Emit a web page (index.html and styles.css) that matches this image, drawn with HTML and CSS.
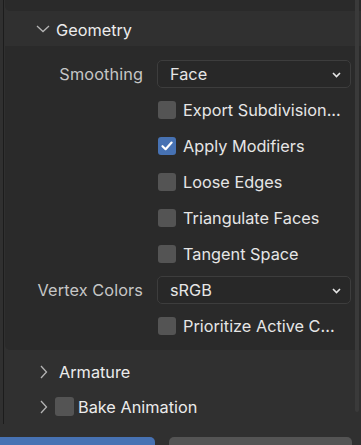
FILE: index.html
```html
<!DOCTYPE html>
<html>
<head>
<meta charset="utf-8">
<link rel="stylesheet" href="styles.css">
</head>
<body>
<div class="root">
  <div class="gutter"></div>
  <div class="main">
    <div class="topbox"></div>
    <div class="header">
      <svg class="chev-down" width="14" height="8" viewBox="0 0 14 8"><path d="M1 1 L7 6.5 L13 1" fill="none" stroke="#b4b4b4" stroke-width="1.3"/></svg>
      <span class="title">Geometry</span>
    </div>
    <div class="subbox">
      <div class="label">Smoothing</div>
      <div class="ctl"><div class="dropdown"><span>Face</span><svg class="dd-chev" width="9" height="6" viewBox="0 0 9 6"><path d="M1 1 L4.5 4.5 L8 1" fill="none" stroke="#e6e6e6" stroke-width="1.6"/></svg></div></div>

      <div class="label"></div>
      <div class="ctl"><span class="cb"></span><span class="txt">Export Subdivision...</span></div>

      <div class="label"></div>
      <div class="ctl"><span class="cb on"><svg width="18" height="18" viewBox="0 0 18 18"><path d="M4.5 9.2 L7.6 12.2 L13.6 5.6" fill="none" stroke="#fff" stroke-width="2.2" stroke-linecap="round" stroke-linejoin="round"/></svg></span><span class="txt">Apply Modifiers</span></div>

      <div class="label"></div>
      <div class="ctl"><span class="cb"></span><span class="txt">Loose Edges</span></div>

      <div class="label"></div>
      <div class="ctl"><span class="cb"></span><span class="txt">Triangulate Faces</span></div>

      <div class="label"></div>
      <div class="ctl"><span class="cb"></span><span class="txt">Tangent Space</span></div>

      <div class="label">Vertex Colors</div>
      <div class="ctl"><div class="dropdown"><span>sRGB</span><svg class="dd-chev" width="9" height="6" viewBox="0 0 9 6"><path d="M1 1 L4.5 4.5 L8 1" fill="none" stroke="#e6e6e6" stroke-width="1.6"/></svg></div></div>

      <div class="label"></div>
      <div class="ctl"><span class="cb"></span><span class="txt">Prioritize Active C...</span></div>
    </div>
    <div class="section first">
      <svg class="chev-right" width="8" height="14" viewBox="0 0 8 14"><path d="M1 1 L6.5 7 L1 13" fill="none" stroke="#b4b4b4" stroke-width="1.3"/></svg>
      <span class="title">Armature</span>
    </div>
    <div class="section">
      <svg class="chev-right" width="8" height="14" viewBox="0 0 8 14"><path d="M1 1 L6.5 7 L1 13" fill="none" stroke="#b4b4b4" stroke-width="1.3"/></svg>
      <span class="cb small"></span>
      <span class="title">Bake Animation</span>
    </div>
    <div class="scrollbar"></div>
  </div>
</div>
<div class="buttons">
  <div class="btn primary"></div>
  <div class="btn secondary"></div>
</div>
</body>
</html>
```

FILE: styles.css
```css
html, body {
  margin: 0;
  padding: 0;
  background: #303030;
  width: 361px;
  height: 445px;
  overflow: hidden;
  font-family: Inter, "Noto Sans", sans-serif;
  font-size: 16.3px;
  color: #e6e6e6;
}
.root {
  display: flex;
  height: 424px;
}
.gutter {
  width: 3px;
  border-right: 1px solid #1c1c1c;
  flex: none;
}
.main {
  flex: 1;
  position: relative;
  display: flex;
  flex-direction: column;
}
.topbox {
  height: 11px;
  margin-left: 1px;
  background: #2a2a2a;
  border-bottom-left-radius: 5px;
}
.header {
  height: 37px;
  box-sizing: border-box;
  padding-top: 3px;
  display: flex;
  align-items: center;
  padding-left: 32px;
}
.chev-down {
  margin-right: 6px;
  margin-top: -2px;
}
.title {
  color: #ececec;
}
.subbox {
  margin-left: 1px;
  background: #2a2a2a;
  border-bottom-left-radius: 5px;
  padding: 10px 10px 6px 0;
  display: grid;
  grid-template-columns: 144px 1fr;
  grid-auto-rows: 36px;
  column-gap: 8px;
}
.label {
  text-align: right;
  padding-right: 6px;
  color: #c6c6c6;
  display: flex;
  align-items: center;
  justify-content: flex-end;
  letter-spacing: 0.1px;
}
.ctl {
  display: flex;
  align-items: center;
}
.dropdown {
  flex: 1;
  height: 26px;
  border: 1px solid #3d3d3d;
  border-radius: 5px;
  background: #282828;
  display: flex;
  align-items: center;
  justify-content: space-between;
  padding: 0 9px 0 12px;
}
.dd-chev {
  margin-top: 2px;
}
.cb {
  width: 18px;
  height: 18px;
  border-radius: 3px;
  background: #545454;
  margin-left: 1px;
  margin-right: 7px;
  flex: none;
  display: block;
}
.cb svg {
  display: block;
}
.cb.on {
  background: #4772b3;
}
.txt {
  color: #e6e6e6;
  white-space: nowrap;
}
.section {
  height: 36px;
  display: flex;
  align-items: center;
  padding-left: 36px;
}
.section.first {
  margin-top: 4px;
}
.chev-right {
  margin-right: 11px;
}
.cb.small {
  width: 19px;
  height: 19px;
  margin-left: -4px;
  margin-right: 4px;
}
.scrollbar {
  position: absolute;
  right: 2px;
  top: 0;
  width: 4px;
  height: 412px;
  background: #3a3a3a;
  border-radius: 0 0 2px 2px;
}
.buttons {
  display: flex;
  margin-top: 13px;
  gap: 14px;
}
.btn {
  height: 20px;
  border-radius: 5px;
}
.btn.primary {
  width: 155px;
  background: #4772b3;
  border-top-left-radius: 0;
}
.btn.secondary {
  width: 183px;
  background: #545454;
}
```
